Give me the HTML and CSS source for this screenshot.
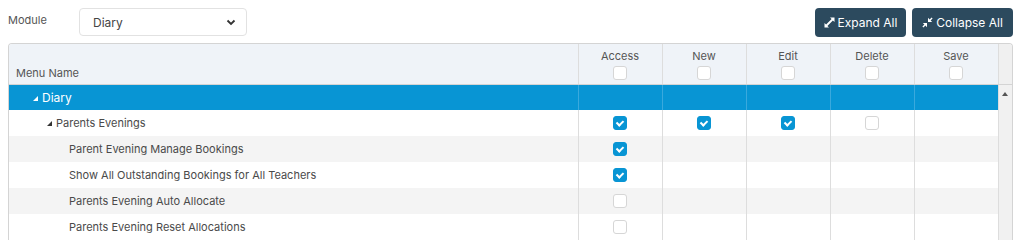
FILE: index.html
```html
<!DOCTYPE html>
<html lang="en">
<head>
    <meta charset="UTF-8">
    <title>Menu Permissions</title>
    <link rel="stylesheet" href="styles.css">
</head>
<body>
    <div class="toolbar">
        <label class="module-label">Module</label>
        <div class="select-box">
            <span>Diary</span>
            <svg class="chevron" width="10" height="7" viewBox="0 0 10 7"><path d="M1.5 1.5 L5 5 L8.5 1.5" fill="none" stroke="#333" stroke-width="1.8"/></svg>
        </div>
        <div class="button-container">
            <button class="btn">
                <svg width="11" height="11" viewBox="0 0 11 11"><path d="M6 0.5 H10.5 V5 L8.9 3.4 L3.4 8.9 L5 10.5 H0.5 V6 L2.1 7.6 L7.6 2.1 Z" fill="#fff"/></svg>
                Expand All
            </button>
            <button class="btn">
                <svg width="11" height="11" viewBox="0 0 11 11"><path d="M6 0.8 V5 H10.2 L8.6 3.4 L10.6 1.4 L9.6 0.4 L7.6 2.4 Z M5 10.2 V6 H0.8 L2.4 7.6 L0.4 9.6 L1.4 10.6 L3.4 8.6 Z" fill="#fff"/></svg>
                Collapse All
            </button>
        </div>
    </div>

    <div class="grid">
        <table>
            <colgroup>
                <col>
                <col class="perm-col">
                <col class="perm-col">
                <col class="perm-col">
                <col class="perm-col">
                <col class="perm-col">
                <col class="scroll-col">
            </colgroup>
            <thead>
                <tr>
                    <th class="name-head">Menu Name</th>
                    <th>Access<span class="box"></span></th>
                    <th>New<span class="box"></span></th>
                    <th>Edit<span class="box"></span></th>
                    <th>Delete<span class="box"></span></th>
                    <th>Save<span class="box"></span></th>
                    <th class="gutter-head"></th>
                </tr>
            </thead>
            <tbody>
                <tr class="selected">
                    <td class="level-0"><span class="arrow"></span>Diary</td>
                    <td></td><td></td><td></td><td></td><td></td>
                    <td class="track"><span class="up"></span></td>
                </tr>
                <tr>
                    <td class="level-1"><span class="arrow"></span>Parents Evenings</td>
                    <td><span class="box checked"></span></td>
                    <td><span class="box checked"></span></td>
                    <td><span class="box checked"></span></td>
                    <td><span class="box"></span></td>
                    <td></td>
                    <td class="track"></td>
                </tr>
                <tr class="alt">
                    <td class="level-2">Parent Evening Manage Bookings</td>
                    <td><span class="box checked"></span></td>
                    <td></td><td></td><td></td><td></td>
                    <td class="track"></td>
                </tr>
                <tr>
                    <td class="level-2">Show All Outstanding Bookings for All Teachers</td>
                    <td><span class="box checked"></span></td>
                    <td></td><td></td><td></td><td></td>
                    <td class="track"></td>
                </tr>
                <tr class="alt">
                    <td class="level-2">Parents Evening Auto Allocate</td>
                    <td><span class="box"></span></td>
                    <td></td><td></td><td></td><td></td>
                    <td class="track"></td>
                </tr>
                <tr>
                    <td class="level-2">Parents Evening Reset Allocations</td>
                    <td><span class="box"></span></td>
                    <td></td><td></td><td></td><td></td>
                    <td class="track"></td>
                </tr>
            </tbody>
        </table>
    </div>
</body>
</html>
```

FILE: styles.css
```css
body {
    font-family: Inter, "Noto Sans", sans-serif;
    font-size: 11px;
    color: #4a4a4a;
    margin: 0;
    padding: 8px;
    background-color: #ffffff;
}

.toolbar {
    display: flex;
    align-items: flex-start;
    height: 35px;
}

.module-label {
    width: 71px;
    padding-top: 5px;
    color: #555555;
}

.select-box {
    width: 143px;
    height: 26px;
    border: 1px solid #e2e2e2;
    border-radius: 4px;
    display: flex;
    align-items: center;
    justify-content: space-between;
    padding: 0 10px 0 13px;
    font-size: 12px;
    color: #444444;
}

.button-container {
    margin-left: auto;
    display: flex;
    gap: 6px;
    margin-right: 3px;
}

.btn {
    display: flex;
    align-items: center;
    justify-content: center;
    gap: 3px;
    height: 29px;
    padding: 0;
    background-color: #2c4a5e;
    color: #ffffff;
    border: none;
    border-radius: 4px;
    font-family: Inter, sans-serif;
    font-size: 12px;
    white-space: nowrap;
}

.btn:first-child {
    width: 91px;
}

.btn:last-child {
    width: 101px;
}

.grid {
    width: 1003px;
    border: 1px solid #d4d4d4;
    border-bottom: none;
    border-radius: 4px 4px 0 0;
    overflow: hidden;
}

table {
    width: 100%;
    border-collapse: collapse;
    table-layout: fixed;
}

.perm-col {
    width: 84px;
}

.scroll-col {
    width: 14px;
}

th {
    background-color: #eff3f8;
    font-weight: normal;
    color: #555555;
    height: 40px;
    padding: 0;
    text-align: center;
    vertical-align: top;
    border-left: 1px solid #dddddd;
    border-bottom: 1px solid #d4d4d4;
    line-height: 14px;
    padding-top: 5px;
    box-sizing: border-box;
}

th .box {
    display: block;
    margin: 3px auto 0;
}

th.name-head {
    border-left: none;
    text-align: left;
    vertical-align: bottom;
    padding: 0 0 4px 7px;
}

th.gutter-head {
    background-color: #f0f0f0;
}

td {
    height: 26px;
    padding: 0;
    text-align: center;
    border-left: 1px solid #dddddd;
}

td:first-child {
    border-left: none;
    text-align: left;
}

tr.alt td {
    background-color: #f4f4f4;
}

tr.selected td {
    background-color: #0895d4;
    color: #ffffff;
    height: 25px;
    border-left-color: #3aa9dd;
    font-size: 12px;
}

td.track,
tr.alt td.track,
tr.selected td.track {
    background-color: #f1f1f1;
    border-left: 1px solid #dddddd;
    vertical-align: top;
}

.up {
    display: block;
    width: 0;
    height: 0;
    margin: 7px auto 0;
    border-left: 3px solid transparent;
    border-right: 3px solid transparent;
    border-bottom: 4px solid #555555;
}

.level-0 {
    padding-left: 24px;
}

.level-1 {
    padding-left: 38px;
}

.level-2 {
    padding-left: 60px;
}

.arrow {
    display: inline-block;
    width: 0;
    height: 0;
    border-left: 5px solid transparent;
    border-bottom: 5px solid #333333;
    margin-right: 4px;
    vertical-align: 1px;
}

tr.selected .arrow {
    border-bottom-color: #ffffff;
}

.box {
    display: inline-block;
    width: 12px;
    height: 12px;
    border: 1px solid #d6d6d6;
    border-radius: 3px;
    background-color: #ffffff;
    vertical-align: middle;
    position: relative;
}

.box.checked {
    background-color: #0895d4;
    border-color: #0895d4;
}

.box.checked::after {
    content: "";
    position: absolute;
    left: 3px;
    top: 1px;
    width: 5px;
    height: 3px;
    border-left: 2px solid #ffffff;
    border-bottom: 2px solid #ffffff;
    transform: translate(-0.5px, 2px) rotate(-45deg);
}
```
